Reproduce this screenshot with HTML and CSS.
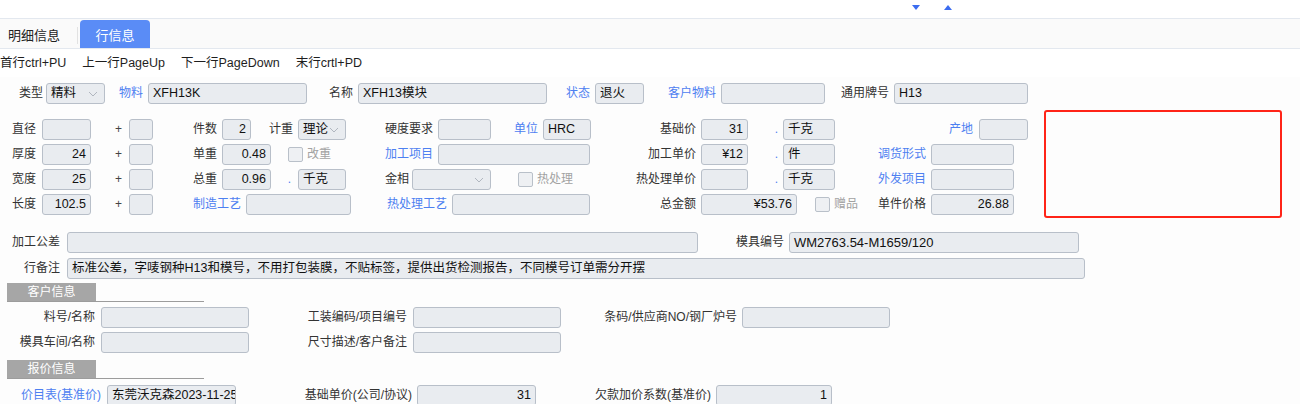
FILE: index.html
```html
<!DOCTYPE html>
<html lang="zh-CN">
<head>
<meta charset="utf-8">
<title>行信息</title>
<link rel="stylesheet" href="styles.css">
</head>
<body>
<div class="topbar">
  <span class="arr-down"></span>
  <span class="arr-up"></span>
</div>
<div class="tabs">
  <div class="tab">明细信息</div>
  <span class="tab-sep"></span>
  <div class="tab tab-active">行信息</div>
</div>
<div class="toolbar">
  <span>首行ctrl+PU</span>
  <span>上一行PageUp</span>
  <span>下一行PageDown</span>
  <span>末行crtl+PD</span>
</div>

<div class="form">
  <div class="row r1">
    <span class="lb p3">类型</span>
    <div class="in sel"><span>精料</span><svg class="chev" width="10" height="6" viewBox="0 0 10 6"><polyline points="1,1 5,5 9,1"/></svg></div>
    <span class="lb blue">物料</span>
    <div class="in">XFH13K</div>
    <span class="lb">名称</span>
    <div class="in">XFH13模块</div>
    <span class="lb blue">状态</span>
    <div class="in">退火</div>
    <span class="lb blue">客户物料</span>
    <div class="in"></div>
    <span class="lb">通用牌号</span>
    <div class="in">H13</div>
  </div>

  <div class="mid">
    <div class="mid-rows">
      <div class="row r2">
        <span class="lb p6">直径</span>
        <div class="in"></div>
        <span class="lb plus">+</span>
        <div class="in"></div>
        <span class="lb">件数</span>
        <div class="in num">2</div>
        <span class="lb">计重</span>
        <div class="in sel"><span>理论</span><svg class="chev" width="10" height="6" viewBox="0 0 10 6"><polyline points="1,1 5,5 9,1"/></svg></div>
        <span class="lb">硬度要求</span>
        <div class="in"></div>
        <span class="lb blue">单位</span>
        <div class="in">HRC</div>
        <span class="lb">基础价</span>
        <div class="in num">31</div>
        <span class="lb dot">.</span>
        <div class="in">千克</div>
        <span class="lb blue p6">产地</span>
        <div class="in"></div>
      </div>
      <div class="row r3">
        <span class="lb p6">厚度</span>
        <div class="in num">24</div>
        <span class="lb plus">+</span>
        <div class="in"></div>
        <span class="lb">单重</span>
        <div class="in num">0.48</div>
        <span class="chk chk-a"><span class="cb"></span><span class="dis">改重</span></span>
        <span class="lb blue">加工项目</span>
        <div class="in"></div>
        <span class="lb">加工单价</span>
        <div class="in num">¥12</div>
        <span class="lb dot">.</span>
        <div class="in">件</div>
        <span class="lb blue">调货形式</span>
        <div class="in"></div>
      </div>
      <div class="row r4">
        <span class="lb p6">宽度</span>
        <div class="in num">25</div>
        <span class="lb plus">+</span>
        <div class="in"></div>
        <span class="lb">总重</span>
        <div class="in num">0.96</div>
        <span class="lb dot dot-b">.</span>
        <div class="in">千克</div>
        <span class="lb p3">金相</span>
        <div class="in sel"><span></span><svg class="chev" width="10" height="6" viewBox="0 0 10 6"><polyline points="1,1 5,5 9,1"/></svg></div>
        <span class="chk chk-b"><span class="cb"></span><span class="dis">热处理</span></span>
        <span class="lb">热处理单价</span>
        <div class="in"></div>
        <span class="lb dot">.</span>
        <div class="in">千克</div>
        <span class="lb blue">外发项目</span>
        <div class="in"></div>
      </div>
      <div class="row r5">
        <span class="lb p6">长度</span>
        <div class="in num">102.5</div>
        <span class="lb plus">+</span>
        <div class="in"></div>
        <span class="lb blue">制造工艺</span>
        <div class="in"></div>
        <span class="lb blue">热处理工艺</span>
        <div class="in"></div>
        <span class="lb">总金额</span>
        <div class="in num">¥53.76</div>
        <span class="chk chk-c"><span class="cb"></span><span class="dis">赠品</span></span>
        <span class="lb">单件价格</span>
        <div class="in num">26.88</div>
      </div>
    </div>
    <div class="mark"></div>
  </div>

  <div class="row r6">
    <span class="lb p7">加工公差</span>
    <div class="in"></div>
    <span class="lb">模具编号</span>
    <div class="in mould">WM2763.54-M1659/120</div>
  </div>
  <div class="row r7">
    <span class="lb p7">行备注</span>
    <div class="in">标准公差，字唛钢种H13和模号，不用打包装膜，不贴标签，提供出货检测报告，不同模号订单需分开摆</div>
  </div>

  <div class="sec sec-1"><div class="sec-t">客户信息</div></div>
  <div class="row rc">
    <span class="lb p6">料号/名称</span>
    <div class="in"></div>
    <span class="lb p6">工装编码/项目编号</span>
    <div class="in"></div>
    <span class="lb">条码/供应商NO/钢厂炉号</span>
    <div class="in"></div>
  </div>
  <div class="row rc rc2">
    <span class="lb p6">模具车间/名称</span>
    <div class="in"></div>
    <span class="lb p6">尺寸描述/客户备注</span>
    <div class="in"></div>
  </div>

  <div class="sec sec-2"><div class="sec-t">报价信息</div></div>
  <div class="row rp">
    <span class="lb blue p6">价目表(基准价)</span>
    <div class="in clip">东莞沃克森2023-11-25</div>
    <span class="lb">基础单价(公司/协议)</span>
    <div class="in num">31</div>
    <span class="lb">欠款加价系数(基准价)</span>
    <div class="in num">1</div>
  </div>
</div>
</body>
</html>
```
FILE: styles.css
```css
html, body {
  margin: 0;
  padding: 0;
  background: #ffffff;
  font-family: "Liberation Sans", "Noto Sans CJK SC", sans-serif;
  color: #222;
  overflow: hidden;
}

/* top bar with the two arrows */
.topbar {
  height: 18px;
  border-bottom: 1px solid #e3e8ef;
  display: flex;
  align-items: center;
  padding-left: 912px;
  gap: 24px;
  box-sizing: content-box;
}
.arr-down, .arr-up {
  width: 0;
  height: 0;
  border-left: 4px solid transparent;
  border-right: 4px solid transparent;
  margin-top: -4px;
}
.arr-down { border-top: 5px solid #3b6cf0; }
.arr-up { border-bottom: 5px solid #3b6cf0; }

/* tabs */
.tabs {
  height: 29px;
  background: #fafafa;
  border-bottom: 1px solid #e3e8ef;
  display: flex;
  align-items: flex-end;
}
.tab {
  height: 28px;
  box-sizing: border-box;
  padding-top: 4px;
  line-height: 24px;
  font-size: 13px;
  color: #222;
}
.tabs .tab:first-child {
  width: 77px;
  padding-left: 8px;
}
.tab-sep {
  width: 1px;
  height: 17px;
  background: #e2e2e2;
  align-self: center;
  margin-top: 4px;
  margin-right: 2px;
}
.tab-active {
  width: 70px;
  text-align: center;
  background: #5a8cf6;
  color: #fff;
  border-radius: 4px 4px 0 0;
}

/* toolbar */
.toolbar {
  height: 28px;
  line-height: 28px;
  font-size: 12.5px;
  color: #1e1e1e;
  display: flex;
  gap: 16px;
}

/* form */
.form {
  background: #fdfdfd;
  padding-top: 6px;
  height: 330px;
}
.row {
  display: grid;
  grid-auto-rows: 21px;
  align-items: center;
}
.r1 { grid-template-columns: 46px 59px 43px 159px 51px 189px 48px 49px 77px 104px 69px 134px; }
.r2 { grid-template-columns: 42px 49px 38px 24px 69px 29px 47px 48px 92px 53px 52px 48px 110px 47px 35px 52px 144px 49px; }
.r3 { grid-template-columns: 42px 49px 38px 24px 69px 49px 64px 103px 152px 111px 47px 35px 52px 96px 83px; }
.r4 { grid-template-columns: 42px 49px 38px 24px 69px 49px 27px 48px 66px 79px 84px 126px 47px 35px 52px 96px 83px; }
.r5 { grid-template-columns: 42px 49px 38px 24px 93px 105px 101px 138px 111px 96px 63px 71px 83px; }
.r6 { grid-template-columns: 67px 631px 91px 290px; margin-top: 14px; }
.r7 { grid-template-columns: 67px 1018px; margin-top: 5px; }
.rc { grid-template-columns: 101px 148px 164px 148px 181px 148px; margin-top: 5px; }
.rc2 { margin-top: 4px; }
.rp { grid-template-columns: 107px 129px 181px 119px 180px 116px; margin-top: 6px; }

.mid {
  display: flex;
  margin-top: 6px;
}
.mid-rows {
  width: 1014px;
  padding-top: 9px;
  display: flex;
  flex-direction: column;
  gap: 4px;
}
.mark {
  width: 238px;
  height: 108px;
  box-sizing: border-box;
  margin-left: 30px;
  border: 2px solid #ff2418;
  border-radius: 3px;
}

/* labels */
.lb {
  font-size: 12px;
  line-height: 21px;
  color: #333;
  text-align: right;
  padding-right: 5px;
  white-space: nowrap;
}
.p3 { padding-right: 3px; }
.p6 { padding-right: 6px; }
.p7 { padding-right: 7px; }
.blue { color: #4d80f1; }
.plus { padding-right: 7px; color: #444; }
.dot { color: #4d80f1; padding-right: 5px; }
.dot-b { padding-right: 7px; }

/* inputs */
.in {
  height: 21px;
  box-sizing: border-box;
  border: 1px solid #b8bfc9;
  background: #e9ecf0;
  border-radius: 3px;
  padding: 0 4px;
  font-size: 12.5px;
  line-height: 19px;
  color: #111;
  white-space: nowrap;
  overflow: hidden;
}
.num { text-align: right; }
.mould { font-size: 13px; }
.clip { text-overflow: clip; padding-right: 0; }
.sel {
  display: flex;
  align-items: center;
  justify-content: space-between;
  padding-right: 6px;
}
.chev {
  fill: none;
  stroke: #b0b6bf;
  stroke-width: 1;
}

/* checkboxes */
.chk {
  display: flex;
  align-items: center;
  gap: 4px;
  font-size: 12px;
  line-height: 21px;
}
.chk-a { padding-left: 17px; }
.chk-b { padding-left: 27px; }
.chk-c { padding-left: 18px; }
.cb {
  width: 15px;
  height: 15px;
  box-sizing: border-box;
  border: 1px solid #b9c0c9;
  background: #eef0f3;
  border-radius: 2px;
}
.dis { color: #a2a2a2; }

/* section headers */
.sec {
  width: 197px;
  margin-left: 7px;
  border-bottom: 1px solid #9c9c9c;
}
.sec-1 { margin-top: 4px; }
.sec-2 { margin-top: 7px; }
.sec-t {
  width: 89px;
  height: 18px;
  line-height: 18px;
  background: #a6a6a6;
  color: #fff;
  font-size: 12px;
  text-align: center;
}
```
